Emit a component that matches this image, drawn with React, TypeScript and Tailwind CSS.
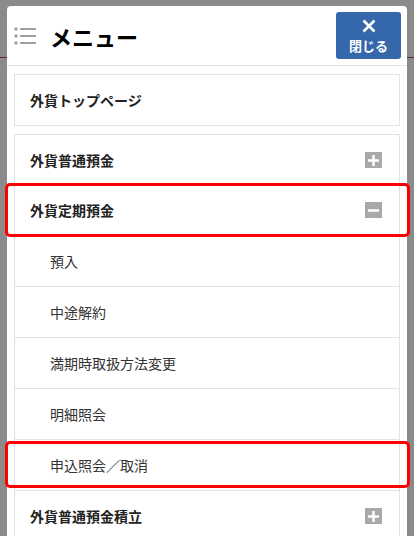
import React from 'react';

const font = { fontFamily: '"Noto Sans CJK JP", "Noto Sans", sans-serif' };

const subItems = ['預入', '中途解約', '満期時取扱方法変更', '明細照会', '申込照会／取消'];

const ToggleIcon = ({ open }: { open: boolean }) => (
  <span className="w-[17px] h-[16px] bg-[#a9a9a9] flex items-center justify-center">
    <svg width="11" height="11" viewBox="0 0 11 11">
      <rect x="0" y="4.25" width="11" height="2.5" fill="#fff" />
      {!open && <rect x="4.25" y="0" width="2.5" height="11" fill="#fff" />}
    </svg>
  </span>
);

const ParentRow = ({ label, open }: { label: string; open: boolean }) => (
  <div className="h-[50px] flex items-center justify-between pl-[15px] pr-[17px]">
    <span className="text-[14px] font-bold text-[#222]">{label}</span>
    <ToggleIcon open={open} />
  </div>
);

export default function App() {
  return (
    <div className="relative h-[536px] w-[414px] overflow-hidden bg-[#8b8b8b] pt-[6px] pl-[7px] pr-[7px]" style={font}>
      <div className="absolute left-0 top-[57px] w-[7px] h-[1px] bg-[#5b2a3d]" />
      <div className="absolute right-0 top-[57px] w-[7px] h-[1px] bg-[#5b2a3d]" />

      <div className="h-full bg-white rounded-t-[4px]">
        <div className="h-[60px] flex items-center justify-between border-b border-[#e2e2e2] pl-[7px] pr-[6px]">
          <div className="flex items-center">
            <svg width="22" height="18" viewBox="0 0 22 18" className="mr-[14px]">
              <circle cx="2" cy="2" r="1.7" fill="#a0a0a0" />
              <circle cx="2" cy="9" r="1.7" fill="#a0a0a0" />
              <circle cx="2" cy="16" r="1.7" fill="#a0a0a0" />
              <rect x="6" y="1" width="16" height="2" fill="#a0a0a0" />
              <rect x="6" y="8" width="16" height="2" fill="#a0a0a0" />
              <rect x="6" y="15" width="16" height="2" fill="#a0a0a0" />
            </svg>
            <span className="text-[22px] font-bold text-black leading-none">メニュー</span>
          </div>
          <button className="w-[65px] h-[47px] bg-[#3567ab] rounded-[3px] flex flex-col items-center justify-center text-white">
            <svg width="14" height="14" viewBox="0 0 14 14">
              <path d="M1.5 1.5 L12.5 12.5 M12.5 1.5 L1.5 12.5" stroke="#fff" strokeWidth="2.6" />
            </svg>
            <span className="text-[13px] font-bold leading-none mt-[6px]">閉じる</span>
          </button>
        </div>

        <div className="pt-[8px] pl-[7px] pr-[7px] flex flex-col gap-[8px]">
          <div className="h-[52px] border border-[#e2e2e2] flex items-center pl-[15px]">
            <span className="text-[14px] font-bold text-[#222]">外貨トップページ</span>
          </div>

          <div className="border border-[#e2e2e2]">
            <ParentRow label="外貨普通預金" open={false} />
            <ParentRow label="外貨定期預金" open={true} />
            {subItems.map((s) => (
              <div key={s} className="h-[51px] flex items-center pl-[35px] border-t border-[#e2e2e2]">
                <span className="text-[14px] text-[#333]">{s}</span>
              </div>
            ))}
            <div className="border-t border-[#e2e2e2]">
              <ParentRow label="外貨普通預金積立" open={false} />
            </div>
          </div>
        </div>
      </div>

      <div className="absolute left-[5px] top-[183px] w-[405px] h-[54px] border-[3px] border-[#ff0000] rounded-[5px]" />
      <div className="absolute left-[5px] top-[441px] w-[405px] h-[47px] border-[3px] border-[#ff0000] rounded-[5px]" />
    </div>
  );
}
